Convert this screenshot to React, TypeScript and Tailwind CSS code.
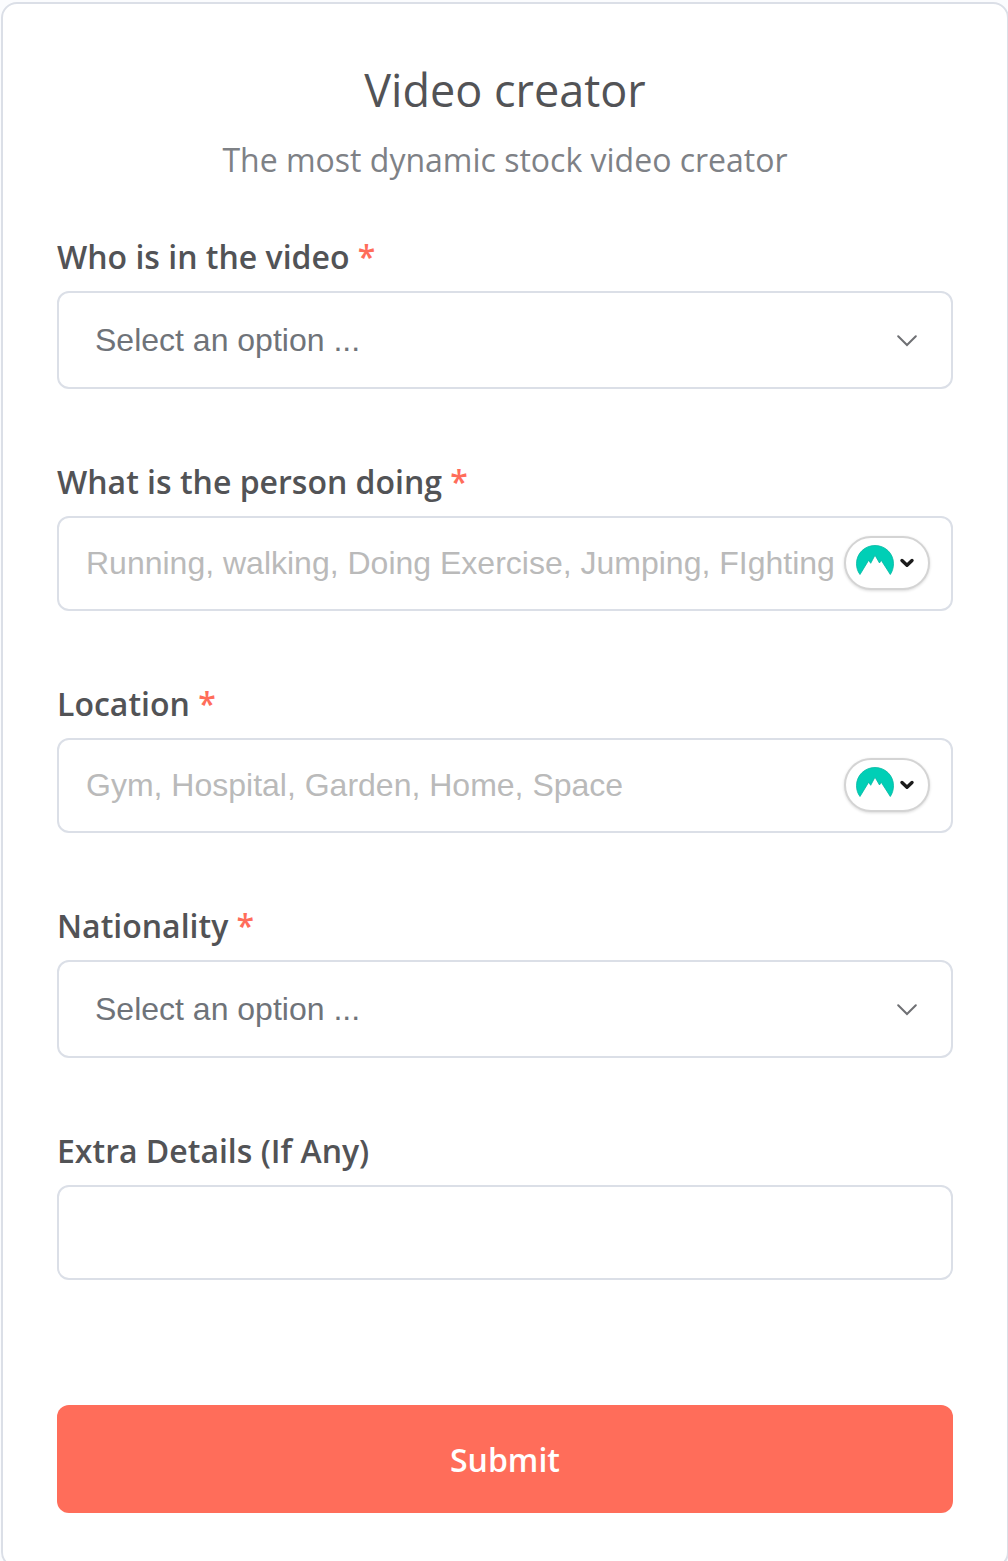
import { useId, type ReactNode } from "react";

function Label({ id, text, required }: { id: string; text: string; required?: boolean }) {
  return (
    <label htmlFor={id} className="mb-3 block text-[32px] leading-[44px] font-semibold text-[#525356]">
      {text}
      {required && <span className="text-[#ff6d5a]"> *</span>}
    </label>
  );
}

function SelectField({ label }: { label: string }) {
  const id = useId();
  return (
    <div>
      <Label id={id} text={label} required />
      <div className="relative">
        <select
          id={id}
          required
          defaultValue=""
          className="block h-[98px] w-full appearance-none rounded-xl border-2 border-[#dbdfe7] bg-white px-9 font-['Liberation_Sans',Arial,sans-serif] text-[32px] text-[#6f7379] outline-none focus:border-[#5a4cc2]"
        >
          <option value="">Select an option ...</option>
        </select>
        <svg
          aria-hidden="true"
          viewBox="0 0 20 12"
          className="pointer-events-none absolute top-11 right-9 h-3 w-5"
          fill="none"
          stroke="#6f7074"
          strokeWidth="2"
          strokeLinecap="round"
        >
          <path d="M1.200 1.200 10 10 18.800 1.200" />
        </svg>
      </div>
    </div>
  );
}

function PassButton() {
  return (
    <button
      type="button"
      aria-label="Fill from password manager"
      className="absolute top-5 right-[23px] flex h-[54px] w-[86px] items-center rounded-full border-2 border-[#d4d4d4] bg-white pl-2.5 shadow-[0_1px_3px_rgba(0,0,0,0.15)]"
    >
      <svg aria-hidden="true" viewBox="0 0 38 32" className="mb-1.5 h-8 w-[38px]">
        <path
          fill="#00cfb6"
          stroke="#00b8a2"
          strokeWidth="0.8"
          d="M4 30.500C1.700 27.500.5 23.800.5 19.700.5 9.300 8.800 1.500 19 1.500S37.500 9.300 37.500 19.700C37.500 23.800 36.300 27.500 34.300 30.500L25.200 16.200 23.500 19 19 11.200 14.700 19.300 12.700 16.200Z"
        />
      </svg>
      <svg aria-hidden="true" viewBox="0 0 16 10" className="ml-[5px] h-2.5 w-4" fill="none" stroke="#1b1b1b" strokeWidth="3.400" strokeLinecap="round" strokeLinejoin="round">
        <path d="M3 2.500 8 7.200 13 2.500" />
      </svg>
    </button>
  );
}

function TextField({
  label,
  placeholder,
  required,
  children,
}: {
  label: string;
  placeholder?: string;
  required?: boolean;
  children?: ReactNode;
}) {
  const id = useId();
  return (
    <div>
      <Label id={id} text={label} required={required} />
      <div className="relative">
        <input
          id={id}
          type="text"
          required={required}
          placeholder={placeholder}
          className="block h-[95px] w-full rounded-xl border-2 border-[#dbdfe7] bg-white pr-28 pl-[27px] font-['Liberation_Sans',Arial,sans-serif] text-[32px] text-[#525356] outline-none placeholder:text-[#bababa] focus:border-[#5a4cc2]"
        />
        {children}
      </div>
    </div>
  );
}

export default function App() {
  return (
    <main className="h-screen overflow-hidden bg-[#fbfcfe] pt-0.5 font-['Open_Sans',sans-serif]">
      <form
        onSubmit={(e) => e.preventDefault()}
        className="-mr-px ml-px rounded-2xl border-2 border-[#dbdfe7] bg-white px-[54px] pt-14 pb-[53px]"
      >
        <header className="mb-[51px] text-center">
          <h1 className="text-[45px] leading-[60px] text-[#525356]">Video creator</h1>
          <p className="mt-4 text-[32px] leading-[48px] text-[#7e8186]">The most dynamic stock video creator</p>
        </header>
        <div className="flex flex-col gap-[71px]">
          <SelectField label="Who is in the video" />
          <TextField label="What is the person doing" placeholder="Running, walking, Doing Exercise, Jumping, FIghting" required>
            <PassButton />
          </TextField>
          <TextField label="Location" placeholder="Gym, Hospital, Garden, Home, Space" required>
            <PassButton />
          </TextField>
          <SelectField label="Nationality" />
          <TextField label="Extra Details (If Any)" />
        </div>
        <button
          type="submit"
          className="mt-[125px] block h-[108px] w-full rounded-xl bg-[#ff6d5a] pt-0.5 text-[32px] font-semibold text-white"
        >
          Submit
        </button>
      </form>
    </main>
  );
}
